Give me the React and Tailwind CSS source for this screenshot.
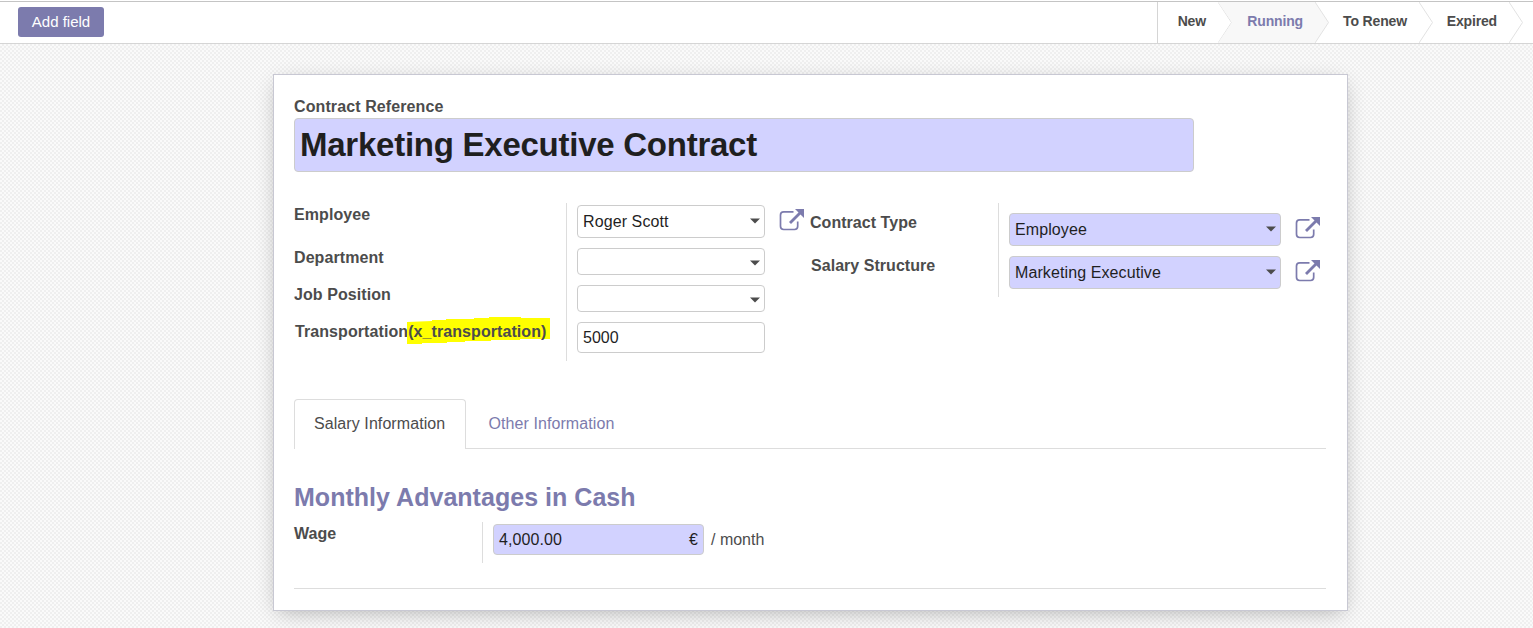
const Caret = () => (
  <svg width="10" height="6" viewBox="0 0 10 6" className="mb-[2px] shrink-0"><path d="M0 .5H10L5 5.5Z" fill="#4c4c4c" /></svg>
);

const LinkIcon = () => (
  <svg width="25" height="22" viewBox="0 0 25 22" className="-ml-px shrink-0" fill="none">
    <path d="M14.5 2.8H4.7Q1.5 2.8 1.5 6V17.3Q1.5 20.5 4.7 20.5H15.5Q18.7 20.5 18.7 17.3V12.5" stroke="#7c7bad" strokeWidth="1.7" />
    <path d="M11 14 21 4" stroke="#7c7bad" strokeWidth="2.8" />
    <path d="M16 0H25V9Z" fill="#7c7bad" />
  </svg>
);

const Select = ({ value, className }) => (
  <div className={`flex items-center justify-between rounded border border-[#ccc] pl-[5px] pr-1 text-[#1f1f1f] ${className}`}>
    <span className="tracking-[0.1px]">{value}</span>
    <Caret />
  </div>
);

const Step = ({ label, className, fill = "#fff" }) => (
  <div className={`flex shrink-0 ${className}`}>
    <div className="flex grow items-center justify-end pb-[3px]">{label}</div>
    <svg width="14" height="41" viewBox="0 0 14 41" className="ml-3 shrink-0 bg-white">
      <path d="M0 0 13.5 20.5 0 41Z" fill={fill} />
      <path d="M0 0 13.5 20.5 0 41" fill="none" stroke="#e2e2e2" />
    </svg>
  </div>
);

export default function App() {
  return (
    <div className="flex h-[628px] w-[1533px] flex-col overflow-hidden bg-[#f9f9f9] bg-[conic-gradient(#efefef_25%,#fafafa_0_50%,#efefef_0_75%,#fafafa_0)] bg-[length:4px_4px] font-['Liberation_Sans',Arial,sans-serif] text-base text-[#4c4c4c]">
      <div className="h-px shrink-0 bg-white" />
      <header className="flex h-[43px] shrink-0 justify-between border-t border-b border-t-[#c4c4c4] border-b-[#d5d5d5] bg-white">
        <button className="mt-[5px] ml-[18px] h-[30px] w-[86px] rounded-[3px] bg-[#7c7bad] text-[15px] text-white">Add field</button>
        <nav className="flex w-[376px] border-l border-[#d5d5d5] text-sm font-bold tracking-[-0.15px]">
          <Step label="New" className="w-[74px]" />
          <div className="-ml-[14px] flex bg-[#f8f8f8] [clip-path:polygon(0_0,100%_0,100%_100%,0_100%,14px_50%)]">
            <Step label="Running" className="w-[111px] text-[#7c7bad]" fill="#f8f8f8" />
          </div>
          <Step label="To Renew" className="w-[104px]" />
          <Step label="Expired" className="w-[90px]" />
        </nav>
      </header>
      <main className="mt-[30px] ml-[273px] h-[537px] w-[1075px] shrink-0 border border-[#c8c8d3] bg-white px-5 shadow-[0_5px_20px_-5px_rgba(0,0,0,0.3)]">
        <div className="mt-5 h-[23px] font-bold leading-6 tracking-[0.1px]">Contract Reference</div>
        <div className="flex h-[54px] w-[900px] items-center rounded border border-[#ccc] bg-[#d2d2ff] pb-px pl-[5px] text-[33px] font-bold leading-[50px] tracking-[-0.25px] text-[#1f1f1f]">Marketing Executive Contract</div>

        <section className="mt-[31px] flex h-[157px] items-start">
          <div className="flex w-[272px] flex-col font-bold leading-6 tracking-[0.08px]">
            <div className="h-[43px]">Employee</div>
            <div className="h-[37px]">Department</div>
            <div className="h-[37px]">Job Position</div>
            <div className="flex pl-px">
              <span>Transportation</span>
              <span className="relative isolate">
                <svg className="absolute -top-[3px] -left-px -z-10" width="144" height="28" viewBox="0 0 144 28">
                  <path d="M0 5 25 4V3H39V2H67V1H82V0H114V1H143V22H113V23H84V24H58V25H40V26H15V27H0Z" fill="#ff0" />
                </svg>
                (x_transportation)
              </span>
            </div>
          </div>
          <div className="flex h-[158px] w-[244px] gap-[15px] border-l border-[#ddd] pt-[2px] pl-[10px]">
            <div className="flex w-[188px] shrink-0 flex-col gap-[10px]">
              <Select value="Roger Scott" className="h-[33px]" />
              <Select value="" className="h-[27px] pt-1" />
              <Select value="" className="h-[27px] pt-1" />
              <div className="flex h-[31px] items-center rounded border border-[#ccc] pl-[5px] text-[#1f1f1f]">5000</div>
            </div>
            <div className="mt-1"><LinkIcon /></div>
          </div>
          <div className="mt-2 w-[188px] font-bold leading-6 tracking-[0.04px]">
            <div className="h-[43px]">Contract Type</div>
            <div className="pl-px">Salary Structure</div>
          </div>
          <div className="flex h-[94px] flex-col gap-[10px] border-l border-[#ddd] pt-[10px] pl-[10px]">
            <div className="flex items-start gap-[15px]">
              <Select value="Employee" className="h-[33px] w-[272px] bg-[#d2d2ff]" />
              <div className="mt-1"><LinkIcon /></div>
            </div>
            <div className="flex items-start gap-[15px]">
              <Select value="Marketing Executive" className="h-[33px] w-[272px] bg-[#d2d2ff]" />
              <div className="mt-1"><LinkIcon /></div>
            </div>
          </div>
        </section>

        <div className="mt-[39px] flex h-[50px] w-[1032px] tracking-[0.08px]">
          <div className="flex w-[172px] items-center rounded-t border border-b-0 border-[#ddd] pb-px pl-[19px]">Salary Information</div>
          <div className="flex grow items-center border-b border-[#ddd] pl-[22.5px] text-[#7c7bad]">Other Information</div>
        </div>

        <h2 className="mt-8 h-[33px] text-[25px] font-bold leading-[33px] tracking-[0.03px] text-[#7c7bad]">Monthly Advantages in Cash</h2>
        <div className="mt-2 flex h-[67px] w-[1032px] items-start border-b border-[#ddd]">
          <div className="w-[188px] font-bold leading-6">Wage</div>
          <div className="flex h-[41px] items-start border-l border-[#ddd] pt-[2px] pl-[10px]">
            <div className="flex h-[31px] w-[211px] items-center justify-between rounded border border-[#ccc] bg-[#d2d2ff] px-[5px] text-[#1f1f1f]"><span className="tracking-[0.08px]">4,000.00</span><span>€</span></div>
            <span className="ml-[7px] leading-[31px]">/ month</span>
          </div>
        </div>
      </main>
    </div>
  );
}
